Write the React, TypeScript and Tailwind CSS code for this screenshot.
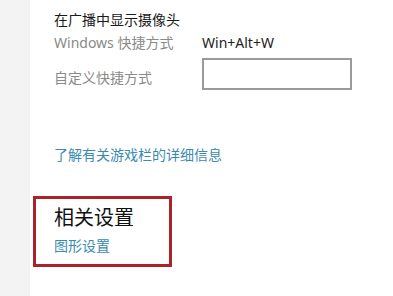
const cjk = { fontFamily: '"Noto Sans", "Noto Sans CJK SC", sans-serif' };

export default function App() {
  return (
    <div className="flex h-[296px] w-[393px] overflow-hidden bg-white" style={cjk}>
      <div className="w-[30px] shrink-0 bg-[#f3f3f3]" />
      <div className="flex-1 pl-[24px] pt-[10px]">
        <div className="text-[14px] leading-[20px] text-[#1a1a1a]">在广播中显示摄像头</div>
        <div className="mt-[3px] flex items-center text-[14px] leading-[20px]">
          <span className="w-[148px] text-[#8a8a8a]">Windows 快捷方式</span>
          <span className="text-[#222]">Win+Alt+W</span>
        </div>
        <div className="mt-[5px] flex items-start">
          <span className="mt-[10px] w-[148px] text-[14px] leading-[20px] text-[#8a8a8a]">自定义快捷方式</span>
          <div className="h-[32px] w-[150px] border-2 border-[#9a9a9a] bg-white" />
        </div>
        <div className="mt-[55px] text-[14px] leading-[20px] text-[#3a8bb0]">了解有关游戏栏的详细信息</div>
        <div className="-ml-[21px] mt-[31px] w-[139px] border-[3px] border-[#a8242a] pb-[8px] pl-[18px] pt-[6px]">
          <div className="text-[20px] leading-[26px] text-[#111]">相关设置</div>
          <div className="mt-[5px] text-[14px] leading-[20px] text-[#3a8bb0]">图形设置</div>
        </div>
      </div>
    </div>
  );
}
